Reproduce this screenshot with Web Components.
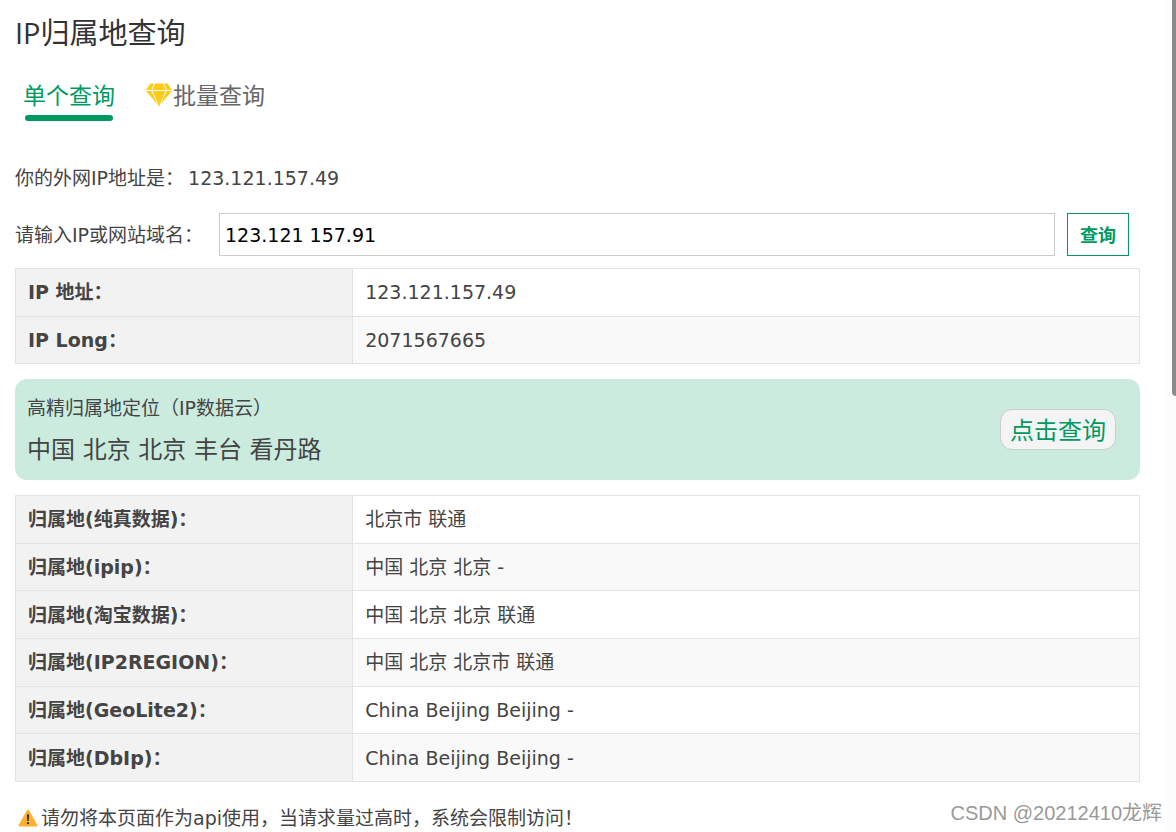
<!DOCTYPE html>
<html lang="zh-CN">
<head>
<meta charset="utf-8">
<meta name="viewport" content="width=device-width, initial-scale=1">
<title>IP归属地查询</title>
<style>
  html, body { margin: 0; min-height: 100vh; }
  body {
    --green: #009a61;
    --line: #e3e3e3;
    --cjk: "Open Sans", "Noto Sans CJK SC", sans-serif;
    background: #fff;
    color: #444;
    font: 19px/28px "DejaVu Sans", "Noto Sans CJK SC", sans-serif;
  }
  #basic { --rows-height: 96px; }
  #places { --rows-height: 287px; }
</style>
</head>
<body>
<ip-page>
  <ip-tabs></ip-tabs>
  <ip-search own="123.121.157.49" value="123.121 157.91"></ip-search>
  <ip-table id="basic"></ip-table>
  <ip-banner>
    <span slot="title">高精归属地定位（IP数据云）</span>
    中国 北京 北京 丰台 看丹路
    <span slot="action">点击查询</span>
  </ip-banner>
  <ip-table id="places"></ip-table>
  <ip-notice>请勿将本页面作为api使用，当请求量过高时，系统会限制访问！</ip-notice>
  <ip-mark slot="mark">CSDN @20212410龙辉</ip-mark>
</ip-page>

<script>
const define = (name, html, setup) => customElements.define(name, class extends HTMLElement {
  constructor() {
    super();
    this.attachShadow({ mode: "open" }).innerHTML = html;
  }
  connectedCallback() { if (setup) setup(this, this.shadowRoot); }
});

define("ip-page", `
  <style>
    :host { display: grid; grid-template-columns: minmax(0, 1fr) 9px; position: relative; min-height: 100vh; }
    main { padding: 12px 27px 0 15px; }
    h1 { margin: 0 0 20px; font: 400 29px/42px var(--cjk); color: #333; }
    .track { background: #fcfcfc; }
    .thumb { height: 396px; margin-left: 5px; background: #8b8b8b; border-radius: 0 0 0 4px; }
  </style>
  <main><h1>IP归属地查询</h1><slot></slot></main>
  <div class="track" aria-hidden="true"><div class="thumb"></div></div>
  <slot name="mark"></slot>`);

define("ip-tabs", `
  <style>
    :host { display: block; margin-bottom: 43px; }
    nav { display: flex; gap: 31px; padding-left: 8px; font: 400 23px/34px var(--cjk); }
    a { display: flex; align-items: center; padding: 4px 0; color: #666; text-decoration: none; height: 34px; }
    a[aria-current] { flex-direction: column; align-items: stretch; color: var(--green); height: auto; padding-bottom: 0; }
    a[aria-current]::after { content: ""; height: 6px; margin: 3px 2px 0; border-radius: 3px; background: var(--green); }
    svg { display: block; width: 26px; height: 24px; margin-right: 1px; }
  </style>
  <nav>
    <a href="#single" aria-current="page">单个查询</a>
    <a href="#batch"><svg viewBox="0 0 26 24" aria-hidden="true" fill="#ffcb14"><path d="M4.5 0.5H8L5.3 7H0z"/><path d="M9.2 .5h7.6L19.8 7H6.4z"/><path d="M18 .5h3.5L26 7h-5.1z"/><path d="M0 8h5.3l6 13.2z"/><path d="M6.5 8h13L13 23.7z"/><path d="M20.7 8H26L14.7 21.2z"/></svg>批量查询</a>
  </nav>`);

define("ip-search", `
  <style>
    :host { display: block; }
    p { display: flex; gap: 4px; margin: 0 0 21px; }
    form { display: flex; align-items: center; gap: 12px; margin: 0 11px 12px 0; }
    label { min-width: 192px; }
    input { flex: 1; min-width: 0; box-sizing: border-box; height: 43px; padding: 0 5px; border: 1px solid #ccc; font: inherit; color: #000; background: #fff; }
    button { height: 43px; width: 62px; padding: 0; border: 1px solid var(--green); background: #fff; color: var(--green); font: 700 18px/28px var(--cjk); }
  </style>
  <p>你的外网IP地址是：<span></span></p>
  <form><label for="q">请输入IP或网站域名：</label><input id="q" type="text"><button type="button">查询</button></form>`,
  (host, root) => {
    root.querySelector("span").textContent = host.getAttribute("own");
    root.querySelector("input").value = host.getAttribute("value");
  });

define("ip-table", `
  <style>
    :host { display: block; }
    table { width: 100%; height: var(--rows-height); border-collapse: collapse; table-layout: fixed; }
    th, td { box-sizing: border-box; padding: 0 12px; border: 1px solid var(--line); text-align: left; }
    th { width: 30%; background: #f2f2f2; font-weight: 700; }
    tr:nth-child(even) td { background: #f9f9f9; }
  </style>
  <table><tbody></tbody></table>`,
  (host, root) => {
    const rows = {
      basic: [["IP 地址：", "123.121.157.49"], ["IP Long：", "2071567665"]],
      places: [
        ["归属地(纯真数据)：", "北京市 联通"],
        ["归属地(ipip)：", "中国 北京 北京 -"],
        ["归属地(淘宝数据)：", "中国 北京 北京 联通"],
        ["归属地(IP2REGION)：", "中国 北京 北京市 联通"],
        ["归属地(GeoLite2)：", "China Beijing Beijing -"],
        ["归属地(DbIp)：", "China Beijing Beijing -"]
      ]
    }[host.id];
    root.querySelector("tbody").innerHTML =
      rows.map(([k, v]) => `<tr><th scope="row">${k}</th><td>${v}</td></tr>`).join("");
  });

define("ip-banner", `
  <style>
    :host { display: flex; align-items: center; justify-content: space-between; margin: 15px 0; padding: 0 24px 0 12px; border-radius: 12px; background: #cbebdf; }
    .info { padding: 12px 0 4px; }
    .title { line-height: 34px; }
    .place { font-size: 24px; line-height: 51px; }
    button { height: 41px; padding: 0 9px; border: 1px solid #ccc; border-radius: 12px; background: #f4f4f4; color: var(--green); font: 400 24px/38px var(--cjk); }
  </style>
  <div class="info"><div class="title"><slot name="title"></slot></div><div class="place"><slot></slot></div></div>
  <button type="button"><slot name="action"></slot></button>`);

define("ip-notice", `
  <style>
    :host { display: flex; align-items: center; gap: 3px; padding: 22px 0 0 3px; }
    svg { width: 20px; height: 18px; flex: none; }
  </style>
  <svg viewBox="0 0 20 18" aria-hidden="true"><path d="M10 1.6 18.5 16.6H1.5z" fill="#ffb02e" stroke="#ffb02e" stroke-width="2" stroke-linejoin="round"/><path d="M9 5.5h2l-.4 6.5H9.4z" fill="#222"/><circle cx="10" cy="14.2" r="1.1" fill="#222"/></svg>
  <span><slot></slot></span>`);

define("ip-mark", `
  <style>
    :host { position: absolute; right: 14px; bottom: 4px; font: 20px/30px "Liberation Sans", "Noto Sans CJK SC", sans-serif; color: #999; text-shadow: -1px -1px 0 #fff; }
  </style>
  <slot></slot>`);
</script>
</body>
</html>
